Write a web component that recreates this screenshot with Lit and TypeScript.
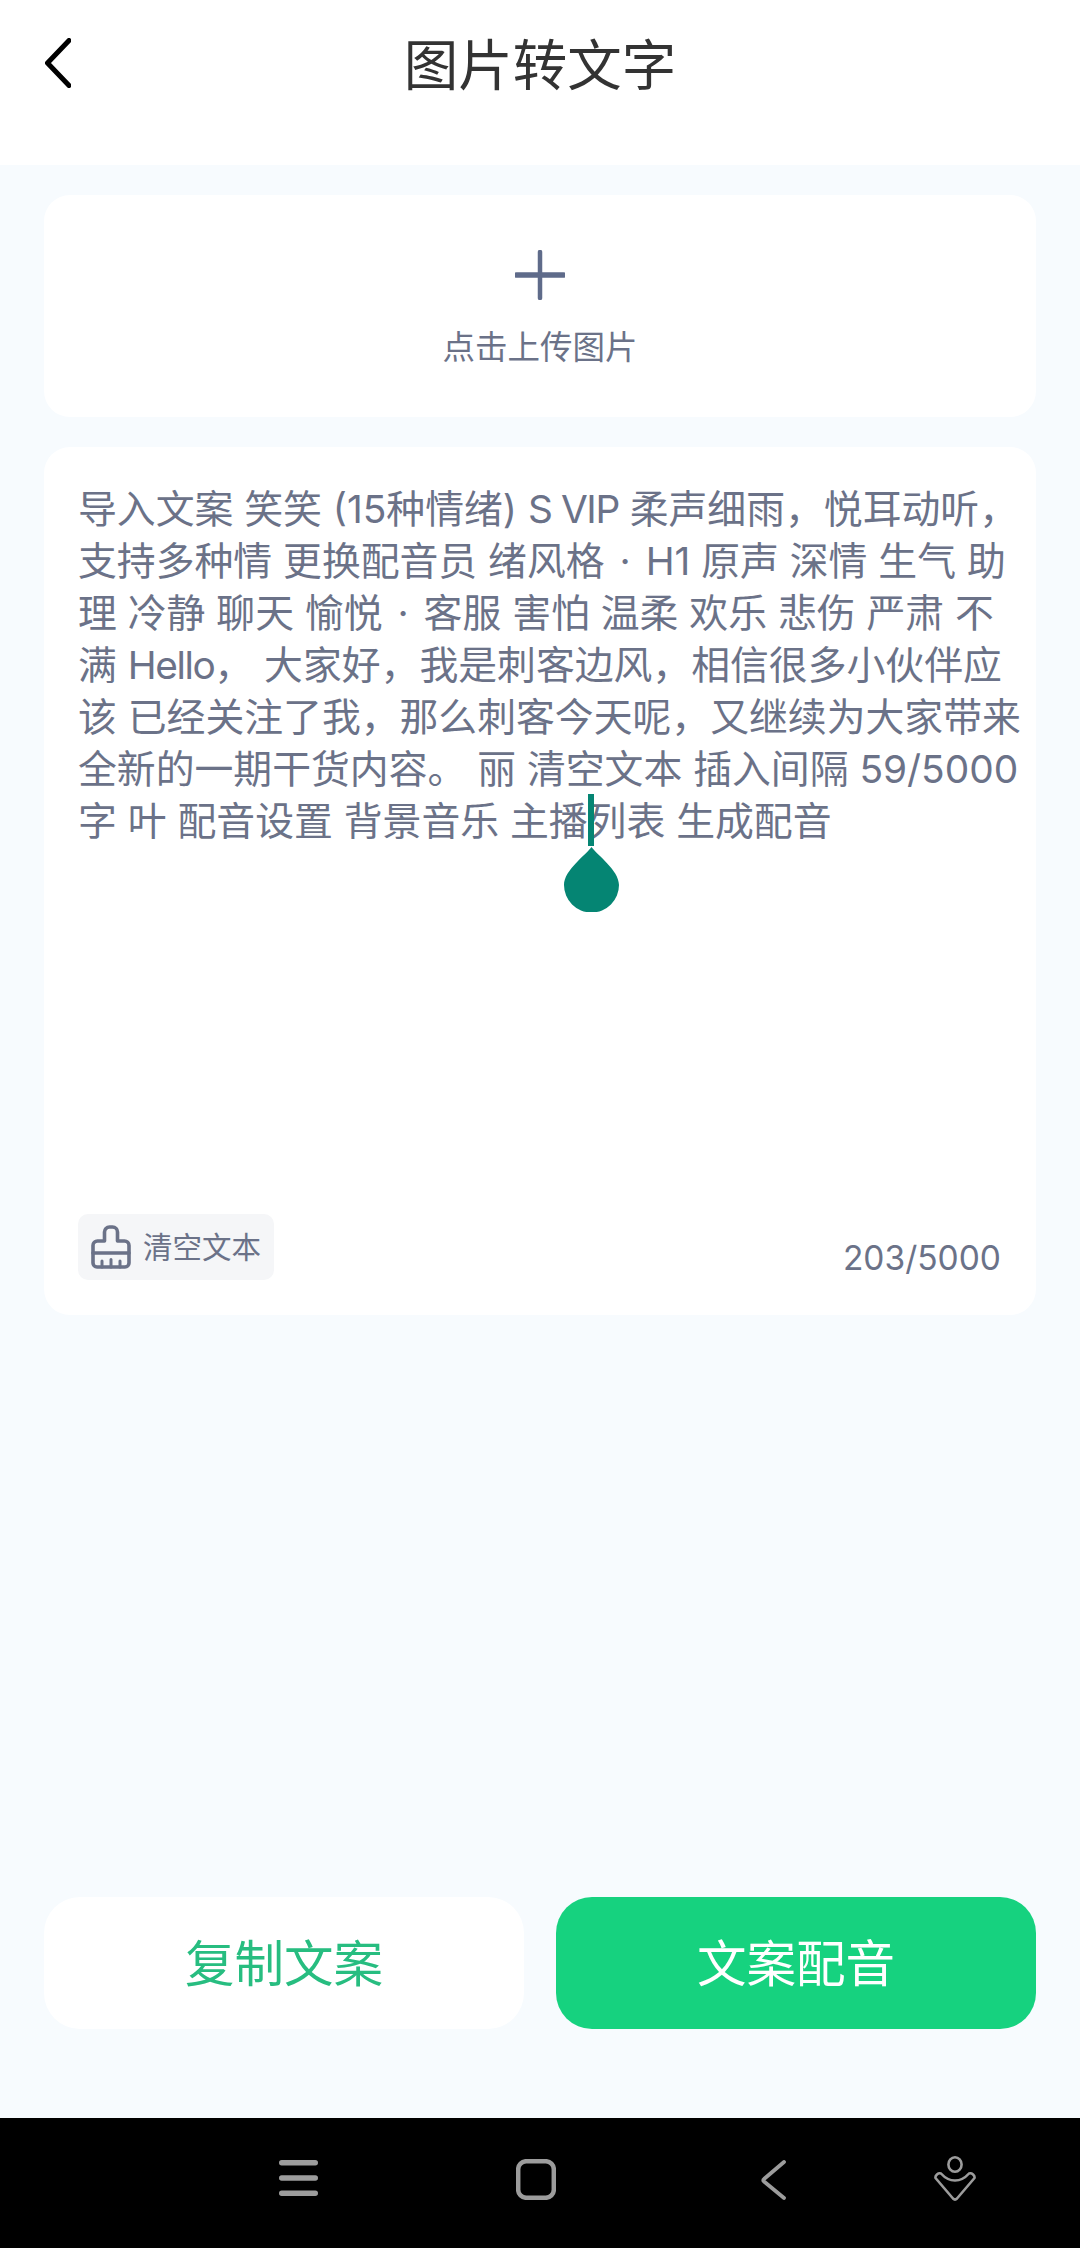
import { LitElement, html, css } from "lit";
import { customElement } from "lit/decorators.js";

@customElement("app-root")
export class AppRoot extends LitElement {
  static styles = css`
    :host {
      display: block;
      width: 1080px;
      height: 2248px;
      font-family: "Noto Sans CJK SC", "Noto Sans", sans-serif;
    }
    .page {
      display: flex;
      flex-direction: column;
      height: 2248px;
      background: #f7fbfe;
    }
    .header {
      height: 165px;
      flex: none;
      background: #fff;
      display: grid;
      grid-template-columns: 45px 26px 1fr 71px;
      padding-top: 38px;
      box-sizing: border-box;
    }
    .back {
      grid-column: 2;
      width: 26px;
      height: 50px;
    }
    .title {
      grid-column: 3;
      margin-top: -2px;
      text-align: center;
      font-size: 54.5px;
      line-height: 52px;
      color: #333;
    }
    .main {
      flex: 1;
      display: flex;
      flex-direction: column;
      padding: 30px 44px 0;
      gap: 30px;
    }
    .card {
      background: #fff;
      border-radius: 26px;
    }
    .upload {
      height: 222px;
      display: flex;
      flex-direction: column;
      align-items: center;
      box-sizing: border-box;
      padding-top: 55px;
    }
    .plus {
      width: 50px;
      height: 50px;
    }
    .upload-label {
      margin-top: 27px;
      font-size: 32.5px;
      line-height: 36px;
      color: #6b7288;
    }
    .editor {
      position: relative;
      height: 868px;
      box-sizing: border-box;
      padding: 36px 0 35px 34px;
      display: flex;
      flex-direction: column;
    }
    .text {
      flex: 1;
      font-family: Inter, "Noto Sans CJK SC", sans-serif;
      font-size: 38.85px;
      line-height: 52px;
      color: #6b7288;
      white-space: nowrap;
    }
    .tight {
      letter-spacing: -1.4px;
    }
    .dot {
      margin: 0 4px;
    }
    .foot {
      display: flex;
      justify-content: space-between;
      align-items: flex-end;
      padding-right: 35px;
    }
    .clear {
      display: flex;
      align-items: center;
      gap: 12px;
      height: 66px;
      width: 196px;
      box-sizing: border-box;
      padding-left: 13px;
      background: #f5f6f8;
      border-radius: 10px;
      font-size: 29.5px;
      line-height: 60px;
      color: #6b7288;
      white-space: nowrap;
    }
    .clear span {
      margin-top: -5px;
    }
    .brush {
      width: 40px;
      height: 44px;
      flex: none;
    }
    .count {
      font-family: Inter, "Noto Sans", sans-serif;
      font-size: 33.5px;
      line-height: 44px;
      color: #6b7288;
    }
    .caret {
      position: absolute;
      left: 520px;
      top: 347px;
      width: 55px;
      height: 118px;
      display: block;
    }
    .actions {
      margin-top: auto;
      display: grid;
      grid-template-columns: 1fr 1fr;
      gap: 32px;
      padding-bottom: 89px;
    }
    .btn {
      height: 132px;
      border-radius: 36px;
      display: flex;
      align-items: center;
      justify-content: center;
      font-size: 49.5px;
      padding-bottom: 5px;
      box-sizing: border-box;
    }
    .copy {
      background: #fff;
      color: #27bd80;
    }
    .dub {
      background: #16d27f;
      color: #fff;
    }
    .nav {
      flex: none;
      height: 130px;
      background: #000;
      display: flex;
      align-items: flex-start;
      padding: 38px 0 0 279px;
      box-sizing: border-box;
      color: #9c9c9c;
    }
    .nav svg {
      display: block;
      flex: none;
    }
    .n-menu { margin-top: 4px; width: 39px; height: 36px; }
    .n-home { margin: 3px 0 0 198px; width: 40px; height: 41px; }
    .n-back { margin: 4px 0 0 205px; width: 25px; height: 40px; }
    .n-user { margin-left: 148px; width: 42px; height: 45px; }
  `;

  render() {
    return html`
      <div class="page">
        <div class="header">
          <svg class="back" viewBox="0 0 26 50" fill="none" stroke="#000" stroke-width="5" stroke-linecap="round" stroke-linejoin="round">
            <path d="M24 2.5 L2.5 25 L24 47.5" />
          </svg>
          <div class="title">图片转文字</div>
        </div>
        <div class="main">
          <div class="card upload">
            <svg class="plus" viewBox="0 0 50 50" stroke="#5f6b8a" stroke-linecap="round">
              <path d="M1.5 25 H48.5" stroke-width="5.5" />
              <path d="M25 2 V48" stroke-width="4.5" />
            </svg>
            <div class="upload-label">点击上传图片</div>
          </div>
          <div class="card editor">
            <div class="text">
              <div>导入文案 笑笑 (15种情绪) <span class="tight">S VIP</span> 柔声细雨，悦耳动听，</div>
              <div>支持多种情 更换配音员 绪风格 <span class="dot">·</span> H1 原声 深情 生气 助</div>
              <div>理 冷静 聊天 愉悦 <span class="dot">·</span> 客服 害怕 温柔 欢乐 悲伤 严肃 不</div>
              <div>满 <span class="tight">Hello</span>， 大家好，我是刺客边风，相信很多小伙伴应</div>
              <div>该 已经关注了我，那么刺客今天呢，又继续为大家带来</div>
              <div>全新的一期干货内容。 丽 清空文本 插入间隔 59/5000</div>
              <div>字 叶 配音设置 背景音乐 主播列表 生成配音</div>
            </div>
            <div class="foot">
              <div class="clear">
                <svg class="brush" viewBox="0 0 40 44" fill="none" stroke="#6b7288" stroke-width="3.6" stroke-linecap="round" stroke-linejoin="round">
                  <path d="M2 28 V20.5 A4.5 4.5 0 0 1 6.5 16 H13.5 V7 A5 5 0 0 1 18.5 2 H21.5 A5 5 0 0 1 26.5 7 V16 H33.5 A4.5 4.5 0 0 1 38 20.5 V28" />
                  <path d="M2 28 H38 V38 A4 4 0 0 1 34 42 H6 A4 4 0 0 1 2 38 Z" />
                  <path d="M11 42 V36 M20 42 V34.5 M29 42 V36" stroke-width="3" />
                </svg>
                <span>清空文本</span>
              </div>
              <div class="count">203/5000</div>
            </div>
            <svg class="caret" viewBox="0 0 55 118" fill="#058573">
              <rect x="24" y="0" width="6" height="52" />
              <path d="M27.5 53 C33 61 55 76 55 91 A27.5 27.5 0 0 1 0 91 C0 76 22 61 27.5 53 Z" />
            </svg>
          </div>
          <div class="actions">
            <div class="btn card copy">复制文案</div>
            <div class="btn dub">文案配音</div>
          </div>
        </div>
        <div class="nav">
          <svg class="n-menu" viewBox="0 0 39 36" stroke="currentColor" stroke-width="5.4" stroke-linecap="round">
            <path d="M2.7 2.7 H36.3 M2.7 18 H36.3 M2.7 33.3 H36.3" />
          </svg>
          <svg class="n-home" viewBox="0 0 40 41" fill="none" stroke="currentColor" stroke-width="4.5">
            <rect x="2.2" y="2.2" width="35.6" height="36.6" rx="8" />
          </svg>
          <svg class="n-back" viewBox="0 0 25 40" fill="none" stroke="currentColor" stroke-width="3.8" stroke-linecap="round" stroke-linejoin="round">
            <path d="M23 2 L3 19 Q1.5 20 3 21.5 L23 38" />
          </svg>
          <svg class="n-user" viewBox="0 0 42 45" fill="none" stroke="currentColor" stroke-width="2.6" stroke-linejoin="round">
            <ellipse cx="21" cy="8.5" rx="6.6" ry="7.2" />
            <path d="M7 17.5 C11 22 16 24.5 21 24.5 C26 24.5 31 22 35 17.5 C38 16.5 41 19.5 40.5 22 L23 42.5 Q21 44.5 19 42.5 L1.5 22 C1 19.5 4 16.5 7 17.5 Z" />
          </svg>
        </div>
      </div>
    `;
  }
}
